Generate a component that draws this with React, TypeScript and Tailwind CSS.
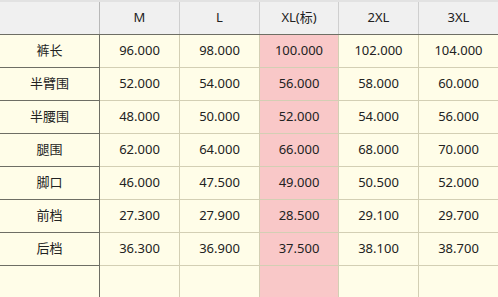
import React from "react";

const cols = ["M", "L", "XL(标)", "2XL", "3XL"];
const widths = ["w-[80px]", "w-[80px]", "w-[79px]", "w-[80px]", "w-[79px]"];
const rows: [string, string[]][] = [
  ["裤长", ["96.000", "98.000", "100.000", "102.000", "104.000"]],
  ["半臂围", ["52.000", "54.000", "56.000", "58.000", "60.000"]],
  ["半腰围", ["48.000", "50.000", "52.000", "54.000", "56.000"]],
  ["腿围", ["62.000", "64.000", "66.000", "68.000", "70.000"]],
  ["脚口", ["46.000", "47.500", "49.000", "50.500", "52.000"]],
  ["前档", ["27.300", "27.900", "28.500", "29.100", "29.700"]],
  ["后档", ["36.300", "36.900", "37.500", "38.100", "38.700"]],
];

export default function App() {
  return (
    <div
      className="w-[498px] h-[297px] overflow-hidden bg-[#fffde8] text-[13px] text-[#222]"
      style={{ fontFamily: '"Noto Sans", "Noto Sans CJK SC", sans-serif' }}
    >
      <div className="flex h-[35px] bg-[#f0f0f0] border-t-2 border-[#e2e2e2] border-b border-b-[#6e6e64]">
        <div className="w-[100px] border-r border-[#b8b8b8]" />
        {cols.map((c, i) => (
          <div
            key={c}
            className={`${widths[i]} flex items-center justify-center border-r border-[#cfcfcf] ${i === 4 ? "border-r-0" : ""}`}
          >
            {c}
          </div>
        ))}
      </div>
      {rows.map(([label, vals]) => (
        <div key={label} className="flex h-[33px]">
          <div className="w-[100px] flex items-center justify-center border-r border-b border-r-[#6e6e64] border-b-[#6e6e64]">
            {label}
          </div>
          {vals.map((v, i) => (
            <div
              key={i}
              className={`${widths[i]} flex items-center justify-center border-b border-[#d3cfb4] ${i === 4 ? "" : "border-r"} ${i === 2 ? "bg-[#f9c8c8]" : ""}`}
            >
              {v}
            </div>
          ))}
        </div>
      ))}
      <div className="flex h-[40px]">
        <div className="w-[100px] border-r border-[#6e6e64]" />
        {widths.map((w, i) => (
          <div
            key={i}
            className={`${w} ${i === 4 ? "" : "border-r"} border-[#d3cfb4] ${i === 2 ? "bg-[#f9c8c8]" : ""}`}
          />
        ))}
      </div>
    </div>
  );
}
